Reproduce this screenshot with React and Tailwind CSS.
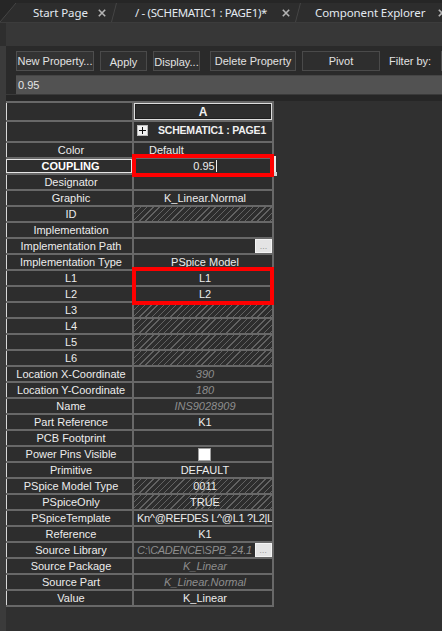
import React from "react";

const rows = [
  { h: "Color", v: "Default", align: "left" },
  { h: "COUPLING", v: "0.95", sel: true },
  { h: "Designator" },
  { h: "Graphic", v: "K_Linear.Normal" },
  { h: "ID", hatch: true },
  { h: "Implementation" },
  { h: "Implementation Path", btn: true },
  { h: "Implementation Type", v: "PSpice Model" },
  { h: "L1", v: "L1" },
  { h: "L2", v: "L2" },
  { h: "L3", hatch: true },
  { h: "L4", hatch: true },
  { h: "L5", hatch: true },
  { h: "L6", hatch: true },
  { h: "Location X-Coordinate", v: "390", italic: true },
  { h: "Location Y-Coordinate", v: "180", italic: true },
  { h: "Name", v: "INS9028909", italic: true },
  { h: "Part Reference", v: "K1" },
  { h: "PCB Footprint" },
  { h: "Power Pins Visible", check: true },
  { h: "Primitive", v: "DEFAULT" },
  { h: "PSpice Model Type", v: "0011", hatch: true },
  { h: "PSpiceOnly", v: "TRUE", hatch: true },
  { h: "PSpiceTemplate", v: "Kn^@REFDES L^@L1 ?L2|L", align: "left" },
  { h: "Reference", v: "K1" },
  { h: "Source Library", v: "C:\\CADENCE\\SPB_24.1", italic: true, align: "left", btn: true },
  { h: "Source Package", v: "K_Linear", italic: true },
  { h: "Source Part", v: "K_Linear.Normal", italic: true },
  { h: "Value", v: "K_Linear" },
];

function CloseX() {
  return (
    <svg width="8" height="8" viewBox="0 0 8 8" className="shrink-0">
      <path d="M0.8 0.8 L7.2 7.2 M7.2 0.8 L0.8 7.2" stroke="#b4b4b4" strokeWidth="1.6" />
    </svg>
  );
}

function Sep() {
  return (
    <svg width="6" height="19" viewBox="0 0 6 19" className="shrink-0">
      <path d="M0.5 19 L5.5 0" stroke="#454545" strokeWidth="1" />
    </svg>
  );
}

function DotsBtn() {
  return (
    <div className="w-[17px] h-[14px] bg-[#e4e4e4] border border-[#f4f4f4] flex items-end justify-center shrink-0">
      <span className="text-[#9a9a9a] text-[9px] leading-[9px] pb-[1px]">...</span>
    </div>
  );
}

function ValueCell({ r }) {
  const base =
    "h-[14px] bg-[#2d2d2d] flex items-center overflow-hidden whitespace-nowrap leading-[14px]";
  const hatch = r.hatch
    ? " bg-[image:repeating-linear-gradient(135deg,#626262_0px,#626262_1px,transparent_1px,transparent_4.4px)]"
    : "";
  const color = r.italic ? " text-[#8e8e8e] italic" : " text-[#ececec]";
  if (r.check) {
    return (
      <div className={base + " justify-center pl-[2px]"}>
        <div className="w-[13px] h-[13px] bg-white border border-[#a0a0a0]" />
      </div>
    );
  }
  if (r.btn) {
    return (
      <div className={base + color}>
        <div className="flex-1 overflow-hidden pl-[3px] tracking-[-0.3px]">{r.v || ""}</div>
        <DotsBtn />
      </div>
    );
  }
  if (r.align === "left") {
    return (
      <div className={base + hatch + color + (r.h === "Color" ? " pl-[15px]" : " pl-[3px] tracking-[-0.3px]")}>
        {r.v}
      </div>
    );
  }
  return (
    <div className={base + hatch + color + " justify-center pl-[4px]"}>
      {r.v}
      {r.sel && <span className="inline-block w-px h-[12px] bg-[#f0f0f0] ml-px" />}
    </div>
  );
}

export default function App() {
  return (
    <div className="w-[442px] h-[631px] overflow-hidden bg-[#2f2f2f] flex flex-col font-['Liberation_Sans',Arial,sans-serif] text-[11px]">
      {/* Tab bar */}
      <div className="h-[22px] shrink-0 bg-[#262626] pt-[3px] flex font-['Noto_Sans',sans-serif] text-[11.5px] text-[#e3e9f0]">
        <div className="w-[111px] h-[19px] bg-[#2d2d2d] flex items-center shrink-0">
          <svg width="16" height="19" viewBox="0 0 16 19" className="shrink-0">
            <path d="M0 0 L16 0 L0 19 Z" fill="#262626" />
            <path d="M0 19 L16 0" stroke="#454545" strokeWidth="1" />
          </svg>
          <span className="ml-[17px] leading-none whitespace-nowrap tracking-[-0.1px]">Start Page</span>
          <span className="ml-auto mr-[5px] flex"><CloseX /></span>
        </div>
        <div className="w-[184px] h-[19px] bg-[#2d2d2d] flex items-center shrink-0">
          <Sep />
          <span className="ml-[18px] leading-none whitespace-nowrap tracking-[-0.35px]">/ - (SCHEMATIC1 : PAGE1)*</span>
          <span className="ml-auto mr-[5px] flex"><CloseX /></span>
        </div>
        <div className="flex-1 h-[19px] bg-[#2d2d2d] flex items-center min-w-0">
          <Sep />
          <span className="ml-[14px] leading-none whitespace-nowrap tracking-[-0.1px]">Component Explorer</span>
          <span className="ml-[13px] flex"><CloseX /></span>
        </div>
      </div>

      {/* Band */}
      <div className="h-[24px] shrink-0 flex border-t border-[#3c3c3c]">
        <div className="w-[6px] bg-[#2e2e2e]" />
        <div className="flex-1 bg-[#373737]" />
      </div>

      {/* Body */}
      <div className="flex-1 flex min-h-0">
        <div className="w-[6px] shrink-0 bg-[#3b3b3b]" />
        <div className="flex-1 flex flex-col min-w-0">
          {/* Toolbar */}
          <div className="bg-[#2a2a2a] pl-[10px] pt-[5px] flex flex-col gap-[4px]">
            <div className="flex items-center h-[20px] text-[#e2e2e2] whitespace-nowrap">
              <div className="shrink-0 w-[78px] h-[20px] border border-[#4e4e4e] bg-[#333333] flex items-center justify-center">New Property...</div>
              <div className="shrink-0 ml-[6px] w-[47px] h-[20px] border border-[#4a4a4a] bg-[#303030] flex items-center justify-center pt-[3px]">Apply</div>
              <div className="shrink-0 ml-[6px] w-[47px] h-[20px] border border-[#4a4a4a] bg-[#303030] flex items-center justify-center pt-[2px]">Display...</div>
              <div className="shrink-0 ml-[10px] w-[86px] h-[20px] border border-[#4a4a4a] bg-[#303030] flex items-center justify-center">Delete Property</div>
              <div className="shrink-0 ml-[6px] w-[78px] h-[20px] border border-[#4a4a4a] bg-[#2e2e2e] flex items-center justify-center">Pivot</div>
              <span className="shrink-0 ml-[9px]">Filter by:</span>
              <div className="shrink-0 ml-[10px] w-[20px] h-[20px] border border-[#4e4e4e] bg-[#2c2c2c]" />
            </div>
            <div className="h-[19px] bg-[#525252] border-t border-[#454545] flex items-center pl-[2px] text-[#e6e6e6] text-[11px]">
              0.95
            </div>
          </div>
          <div className="h-[1px] bg-[#3a3a3a]" />
          <div className="h-[6px] bg-[#262626]" />

          {/* Grid area */}
          <div className="flex-1 bg-[#303030]">
            <div className="relative w-[268px] bg-[#686868] pt-[2px] pr-[2px] pb-[2px] grid grid-cols-[126px_138px] gap-[2px]">
              {/* header row */}
              <div className="h-[17px] bg-[#2d2d2d] border-l border-[#d8d8d8]" />
              <div className="h-[17px] bg-[#2d2d2d] border border-[#dedede] shadow-[inset_0_0_0_1px_#1e1e1e] flex items-center justify-center font-bold text-[#f0f0f0] text-[12px]">
                A
              </div>
              {/* schematic row */}
              <div className="h-[19px] bg-[#2d2d2d] border-l border-[#d8d8d8]" />
              <div className="h-[19px] bg-[#2d2d2d] flex items-start pt-[2px] pl-[3px] whitespace-nowrap overflow-hidden">
                <div className="w-[11px] h-[11px] mt-[1px] bg-[#f2f2f2] border border-[#bdbdbd] flex items-center justify-center shrink-0">
                  <svg width="7" height="7" viewBox="0 0 7 7">
                    <path d="M0 3.5 H7 M3.5 0 V7" stroke="#111" strokeWidth="1" />
                  </svg>
                </div>
                <span className="ml-[10px] font-bold text-[#f0f0f0] text-[10.5px] tracking-[-0.2px] leading-[12px]">SCHEMATIC1 : PAGE1</span>
              </div>
              {rows.map((r) => (
                <React.Fragment key={r.h}>
                  <div
                    className={
                      "h-[14px] bg-[#2d2d2d] flex items-center justify-center pl-[3px] whitespace-nowrap leading-[14px] " +
                      (r.sel
                        ? "border border-[#e6e6e6] font-bold text-white"
                        : "border-l border-[#d8d8d8] text-[#ececec]")
                    }
                  >
                    {r.h}
                  </div>
                  <ValueCell r={r} />
                </React.Fragment>
              ))}

              {/* selection overlays */}
              <div className="absolute left-[126px] top-[53px] w-[142px] h-[23px] border-[4px] border-[#ff0000] pointer-events-none" />
              <div className="absolute left-[268px] top-[55px] w-[2px] h-[16px] bg-[#e8e8e8] pointer-events-none" />
              <div className="absolute left-[268px] top-[71px] w-[3px] h-[4px] bg-[#d0d0d0] pointer-events-none" />
              <div className="absolute left-[126px] top-[166px] w-[142px] h-[38px] border-[4px] border-[#ff0000] pointer-events-none" />
            </div>
          </div>
        </div>
      </div>
    </div>
  );
}
